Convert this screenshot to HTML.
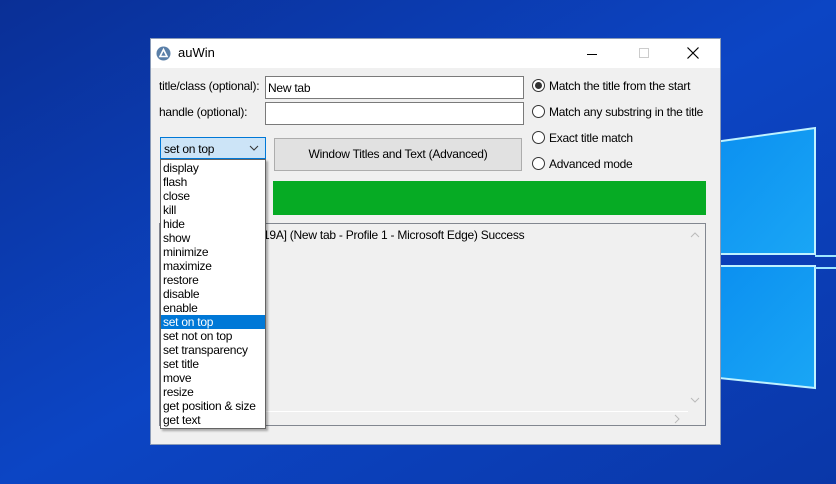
<!DOCTYPE html>
<html><head><meta charset="utf-8"><style>
*{margin:0;padding:0;box-sizing:border-box}
body{width:836px;height:484px;overflow:hidden;position:relative;font-family:"Liberation Sans",sans-serif;font-size:12px;color:#000;background:#0b3aa8;letter-spacing:-0.25px}
.abs{position:absolute}
.win{left:150px;top:38px;width:571px;height:407px;background:#f0f0f0;border:1px solid #8a9bb8}
.tb{left:0;top:0;width:569px;height:29px;background:#fff}
.in{background:#fff;border:1px solid #7a7a7a}
.lbl{white-space:nowrap}
.radio{width:13px;height:13px;border:1px solid #333;border-radius:50%;background:#fff}
.list div{height:14px;line-height:14px;padding-left:2px;white-space:nowrap}
</style></head><body>
<svg class="abs" style="left:0;top:0" width="836" height="484">
<defs>
<linearGradient id="bg" x1="0" y1="0" x2="1" y2="1"><stop offset="0" stop-color="#0a2f96"/><stop offset="0.5" stop-color="#0c45c4"/><stop offset="1" stop-color="#0a37a8"/></linearGradient>
<linearGradient id="pn" x1="0" y1="0" x2="1" y2="1"><stop offset="0" stop-color="#0a8ef0"/><stop offset="1" stop-color="#1aa6f5"/></linearGradient>
</defs>
<rect width="836" height="484" fill="url(#bg)"/>
<polygon points="700,144 815,128 815,254 700,254" fill="url(#pn)"/>
<polygon points="700,266 815,266 815,388 700,376" fill="url(#pn)"/>
<polyline points="700,144 815,128 815,254 700,254" fill="none" stroke="#bff2ff" stroke-width="2"/>
<polyline points="700,266 815,266 815,388 700,376" fill="none" stroke="#bff2ff" stroke-width="2"/>
<line x1="815" y1="256" x2="836" y2="256" stroke="#9fe6ff" stroke-width="2"/>
<line x1="815" y1="268" x2="836" y2="268" stroke="#9fe6ff" stroke-width="2"/>
</svg>
<div class="abs win">
 <div class="abs tb">
  <svg class="abs" style="left:5px;top:7px" width="15" height="15"><circle cx="7.5" cy="7.5" r="7" fill="#5a7fa8"/><path d="M7.5 3.5 L11 10.5 H4 Z" fill="none" stroke="#fff" stroke-width="1.6"/></svg>
  <div class="abs lbl" style="left:27px;top:6px;font-size:13px;letter-spacing:0">auWin</div>
  <div class="abs" style="left:436px;top:15px;width:10px;height:1px;background:#000"></div>
  <div class="abs" style="left:488px;top:9px;width:10px;height:10px;border:1px solid #ccc"></div>
  <svg class="abs" style="left:536px;top:8px" width="12" height="12"><path d="M0.5 0.5L11.5 11.5M11.5 0.5L0.5 11.5" stroke="#000" stroke-width="1.2"/></svg>
 </div>
 <div class="abs lbl" style="left:8px;top:40px">title/class (optional):</div>
 <div class="abs lbl" style="left:8px;top:66px">handle (optional):</div>
 <div class="abs in" style="left:114px;top:37px;width:259px;height:23px"><span style="position:absolute;left:2px;top:4px">New tab</span></div>
 <div class="abs in" style="left:114px;top:63px;width:259px;height:23px"></div>
 <div class="abs radio" style="left:381px;top:40px"><div class="abs" style="left:2px;top:2px;width:7px;height:7px;border-radius:50%;background:#333"></div></div>
 <div class="abs lbl" style="left:398px;top:40px">Match the title from the start</div>
 <div class="abs radio" style="left:381px;top:66px"></div>
 <div class="abs lbl" style="left:398px;top:66px">Match any substring in the title</div>
 <div class="abs radio" style="left:381px;top:92px"></div>
 <div class="abs lbl" style="left:398px;top:92px">Exact title match</div>
 <div class="abs radio" style="left:381px;top:118px"></div>
 <div class="abs lbl" style="left:398px;top:118px">Advanced mode</div>
 <div class="abs" style="left:123px;top:99px;width:248px;height:33px;background:#e1e1e1;border:1px solid #adadad;text-align:center;line-height:31px">Window Titles and Text (Advanced)</div>
 <div class="abs" style="left:122px;top:142px;width:433px;height:34px;background:#06ab24"></div>
 <div class="abs" style="left:8px;top:184px;width:547px;height:203px;border:1px solid #828790;background:#f0f0f0">
  <div class="abs lbl" style="left:103px;top:4px">19A] (New tab - Profile 1 - Microsoft Edge) Success</div>
  <svg class="abs" style="left:530px;top:8px" width="10" height="6"><path d="M1 5L5 1L9 5" fill="none" stroke="#bbb"/></svg>
  <svg class="abs" style="left:530px;top:173px" width="10" height="6"><path d="M1 1L5 5L9 1" fill="none" stroke="#bbb"/></svg>
  <svg class="abs" style="left:514px;top:190px" width="6" height="10"><path d="M1 1L5 5L1 9" fill="none" stroke="#bbb"/></svg>
  <div class="abs" style="left:0;top:187px;width:528px;height:1px;background:#fff"></div>
 </div>
 <div class="abs" style="left:9px;top:98px;width:106px;height:22px;background:#cce4f7;border:1px solid #0078d7"><span class="abs" style="left:3px;top:4px">set on top</span>
  <svg class="abs" style="left:88px;top:7px" width="10" height="6"><path d="M1 1L5 5L9 1" fill="none" stroke="#333"/></svg></div>
 <div class="abs list in" style="left:9px;top:120px;width:106px;height:270px;border-color:#646464;box-shadow:2px 2px 2px rgba(0,0,0,.3);padding-top:1px">
  <div>display</div><div>flash</div><div>close</div><div>kill</div><div>hide</div><div>show</div><div>minimize</div><div>maximize</div><div>restore</div><div>disable</div><div>enable</div><div style="background:#0078d7;color:#fff">set on top</div><div>set not on top</div><div>set transparency</div><div>set title</div><div>move</div><div>resize</div><div>get position &amp; size</div><div>get text</div>
 </div>
</div>
</body></html>
